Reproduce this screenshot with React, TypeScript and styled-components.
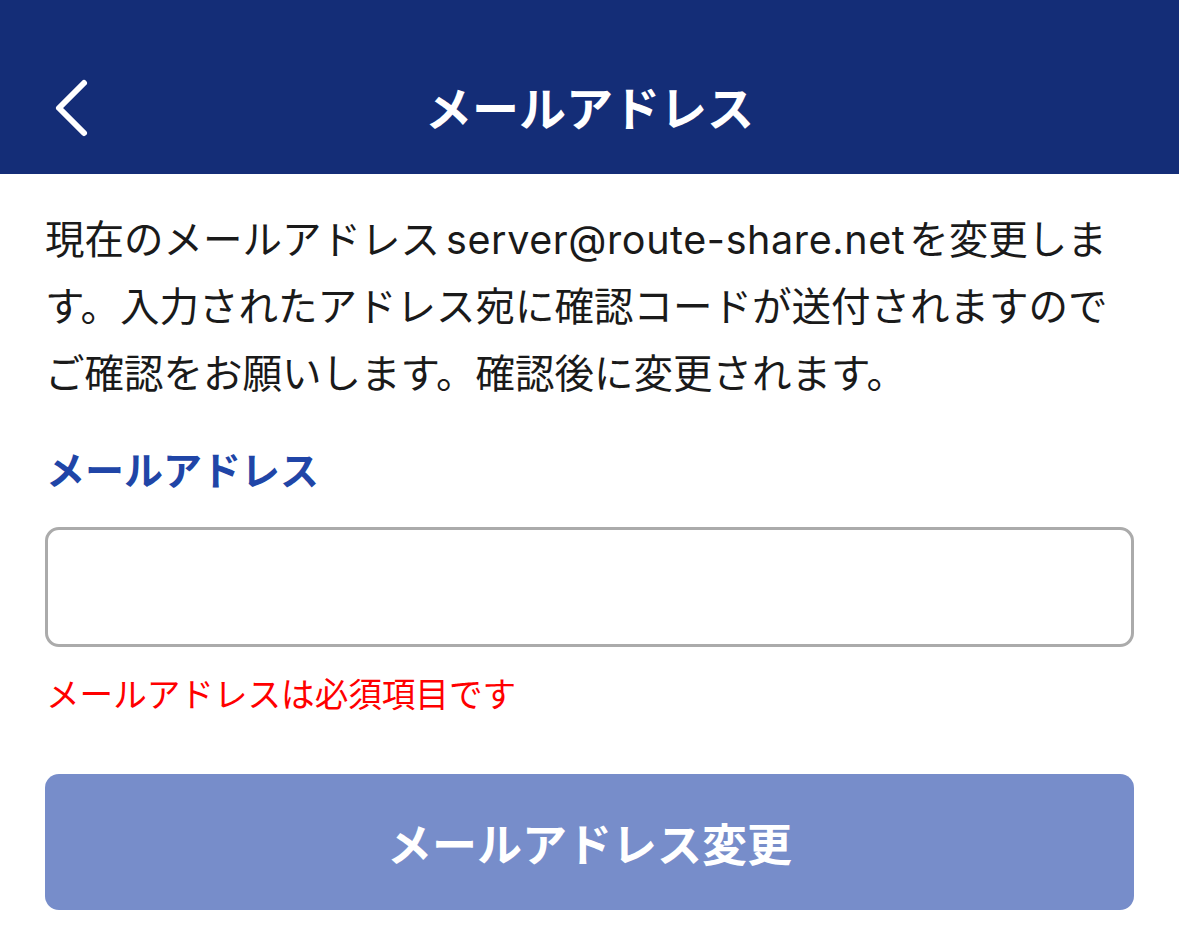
import React from "react";
import styled, { createGlobalStyle } from "styled-components";

const GlobalStyle = createGlobalStyle`
  html, body {
    margin: 0;
    padding: 0;
    background: #ffffff;
  }
  body {
    font-family: "Inter", "Noto Sans CJK JP", "Noto Sans", sans-serif;
    color: #1a1a1a;
  }
  * { box-sizing: border-box; }
`;

const Page = styled.div`
  width: 1179px;
  min-height: 940px;
  display: flex;
  flex-direction: column;
`;

const Header = styled.header`
  height: 174px;
  padding-top: 32px;
  background: #142d77;
  display: grid;
  grid-template-columns: 130px 1fr 130px;
  align-items: center;
`;

const BackButton = styled.button`
  width: 130px;
  height: 100%;
  background: none;
  border: none;
  padding: 10px 0 0 54px;
  display: flex;
  align-items: center;
  cursor: pointer;
`;

const Title = styled.h1`
  margin: 0;
  text-align: center;
  color: #ffffff;
  font-family: "Noto Sans CJK JP", sans-serif;
  font-weight: 700;
  font-size: 47px;
  line-height: 1;
  padding-top: 4px;
`;

const Body = styled.main`
  padding: 33px 45px 0;
  display: flex;
  flex-direction: column;
`;

const Description = styled.p`
  margin: 0;
  font-size: 39.5px;
  line-height: 67px;
  white-space: nowrap;
  color: #1a1a1a;
`;

const Email = styled.span`
  font-family: "Inter", sans-serif;
  letter-spacing: 0.6px;
  margin: 0 4px 0 6px;
`;

const Label = styled.label`
  margin: 33px 0 0 1px;
  color: #2045a7;
  font-family: "Noto Sans CJK JP", sans-serif;
  font-weight: 700;
  font-size: 39px;
  line-height: 54px;
`;

const Input = styled.input`
  margin-top: 32px;
  height: 120px;
  width: 100%;
  border: 3px solid #ababab;
  border-radius: 14px;
  background: #ffffff;
  font-size: 39px;
  padding: 0 24px;
  outline: none;
`;

const ErrorText = styled.div`
  margin: 23px 0 0 1px;
  color: #ff0000;
  font-family: "Noto Sans CJK JP", sans-serif;
  font-size: 33.6px;
  line-height: 46px;
`;

const SubmitButton = styled.button`
  margin-top: 58px;
  height: 136px;
  width: 100%;
  border: none;
  border-radius: 14px;
  background: #778dca;
  color: #ffffff;
  font-family: "Noto Sans CJK JP", sans-serif;
  font-weight: 700;
  font-size: 45px;
  cursor: pointer;
`;

const Chevron = () => (
  <svg width="40" height="60" viewBox="0 0 40 60" fill="none">
    <path
      d="M30 5 L5 30 L30 55"
      stroke="#ffffff"
      strokeWidth="6"
      strokeLinecap="round"
      strokeLinejoin="round"
    />
  </svg>
);

export default function App() {
  return (
    <Page>
      <GlobalStyle />
      <Header>
        <BackButton aria-label="戻る">
          <Chevron />
        </BackButton>
        <Title>メールアドレス</Title>
        <div />
      </Header>
      <Body>
        <Description>
          現在のメールアドレス<Email>server@route-share.net</Email>を変更しま
          <br />
          す。入力されたアドレス宛に確認コードが送付されますので
          <br />
          ご確認をお願いします。確認後に変更されます。
        </Description>
        <Label htmlFor="email">メールアドレス</Label>
        <Input id="email" type="email" />
        <ErrorText>メールアドレスは必須項目です</ErrorText>
        <SubmitButton>メールアドレス変更</SubmitButton>
      </Body>
    </Page>
  );
}
